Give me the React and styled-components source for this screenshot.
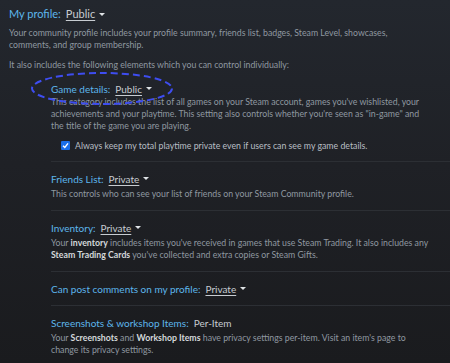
import React from 'react';
import styled, { createGlobalStyle } from 'styled-components';

const GlobalStyle = createGlobalStyle`
  html, body {
    margin: 0;
    padding: 0;
    background: #1b1c1f;
  }
  body {
    font-family: Lato, "Noto Sans", sans-serif;
  }
`;

const Page = styled.div`
  width: 450px;
  height: 363px;
  overflow: hidden;
  box-sizing: border-box;
  padding: 6px 0 0 9px;
  background: linear-gradient(180deg, #23272e 0%, #1f2126 45%, #1a1b1e 100%);
  color: #8f98a0;
`;

const Title = styled.div`
  display: flex;
  align-items: baseline;
  gap: 5px;
  font-size: 11px;
  line-height: 16px;
  color: #5db6ec;
`;

const Dropdown = styled.span`
  display: inline-flex;
  align-items: center;
  gap: 4px;
  color: #c7ccd1;
  font-size: ${(p) => (p.small ? '10px' : '11px')};
`;

const Value = styled.span`
  text-decoration: underline;
  text-underline-offset: 2px;
`;

const Caret = styled.span`
  width: 0;
  height: 0;
  border-left: 3px solid transparent;
  border-right: 3px solid transparent;
  border-top: 3px solid #dfe3e6;
`;

const Text = styled.p`
  margin: ${(p) => p.m || '0'};
  font-size: 8.75px;
  line-height: 12.3px;
  color: #8f98a0;
  white-space: nowrap;
  b {
    font-weight: 700;
    color: #d4d8db;
  }
`;

const Sections = styled.div`
  padding-left: 42px;
  margin-top: 9px;
`;

const Section = styled.div`
  position: relative;
  padding: ${(p) => p.pad || '10px 0 9.5px'};
  border-bottom: ${(p) => (p.last ? 'none' : '1px solid #2c2f34')};
`;

const Label = styled.div`
  display: flex;
  align-items: baseline;
  gap: 5px;
  font-size: 10px;
  line-height: 14px;
  color: #5db6ec;
`;

const Plain = styled.span`
  color: #c7ccd1;
`;

const CheckRow = styled.div`
  display: flex;
  align-items: center;
  gap: 5px;
  margin: 7px 0 0 10px;
  font-size: 8.75px;
  color: #b8bec4;
`;

const Box = styled.span`
  width: 9px;
  height: 9px;
  border-radius: 1px;
  background: #1a6ee8;
  display: inline-flex;
  align-items: center;
  justify-content: center;
`;

const Ellipse = styled.svg`
  position: absolute;
  left: -22px;
  top: -9px;
  pointer-events: none;
`;

const Select = ({ value, small }) => (
  <Dropdown small={small}>
    <Value>{value}</Value>
    <Caret />
  </Dropdown>
);

const App = () => (
  <>
    <GlobalStyle />
    <Page>
      <Title>
        My profile: <Select value="Public" />
      </Title>
      <Text m="5px 0 0">
        Your community profile includes your profile summary, friends list, badges, Steam Level, showcases,
        <br />
        comments, and group membership.
      </Text>
      <Text m="7px 0 0">It also includes the following elements which you can control individually:</Text>

      <Sections>
        <Section pad="2px 0 10px">
          <Ellipse width="146" height="35" viewBox="0 0 146 35">
            <ellipse
              cx="73"
              cy="17.5"
              rx="70"
              ry="15.5"
              fill="none"
              stroke="#3e4df0"
              strokeWidth="2"
              strokeDasharray="7 4"
            />
          </Ellipse>
          <Label>
            Game details: <Select value="Public" small />
          </Label>
          <Text>
            This category includes the list of all games on your Steam account, games you've wishlisted, your
            <br />
            achievements and your playtime. This setting also controls whether you're seen as "in-game" and
            <br />
            the title of the game you are playing.
          </Text>
          <CheckRow>
            <Box>
              <svg width="7" height="7" viewBox="0 0 7 7">
                <path d="M1 3.8 L2.8 5.5 L6 1.4" fill="none" stroke="#fff" strokeWidth="1.4" />
              </svg>
            </Box>
            Always keep my total playtime private even if users can see my game details.
          </CheckRow>
        </Section>

        <Section>
          <Label>
            Friends List: <Select value="Private" small />
          </Label>
          <Text m="2px 0 0">This controls who can see your list of friends on your Steam Community profile.</Text>
        </Section>

        <Section>
          <Label>
            Inventory: <Select value="Private" small />
          </Label>
          <Text m="2px 0 0">
            Your <b>inventory</b> includes items you've received in games that use Steam Trading. It also includes any
            <br />
            <b>Steam Trading Cards</b> you've collected and extra copies or Steam Gifts.
          </Text>
        </Section>

        <Section>
          <Label>
            Can post comments on my profile: <Select value="Private" small />
          </Label>
        </Section>

        <Section last>
          <Label>
            Screenshots &amp; workshop Items: <Plain>Per-Item</Plain>
          </Label>
          <Text m="2px 0 0">
            Your <b>Screenshots</b> and <b>Workshop Items</b> have privacy settings per-item. Visit an item's page to
            <br />
            change its privacy settings.
          </Text>
        </Section>
      </Sections>
    </Page>
  </>
);

export default App;
